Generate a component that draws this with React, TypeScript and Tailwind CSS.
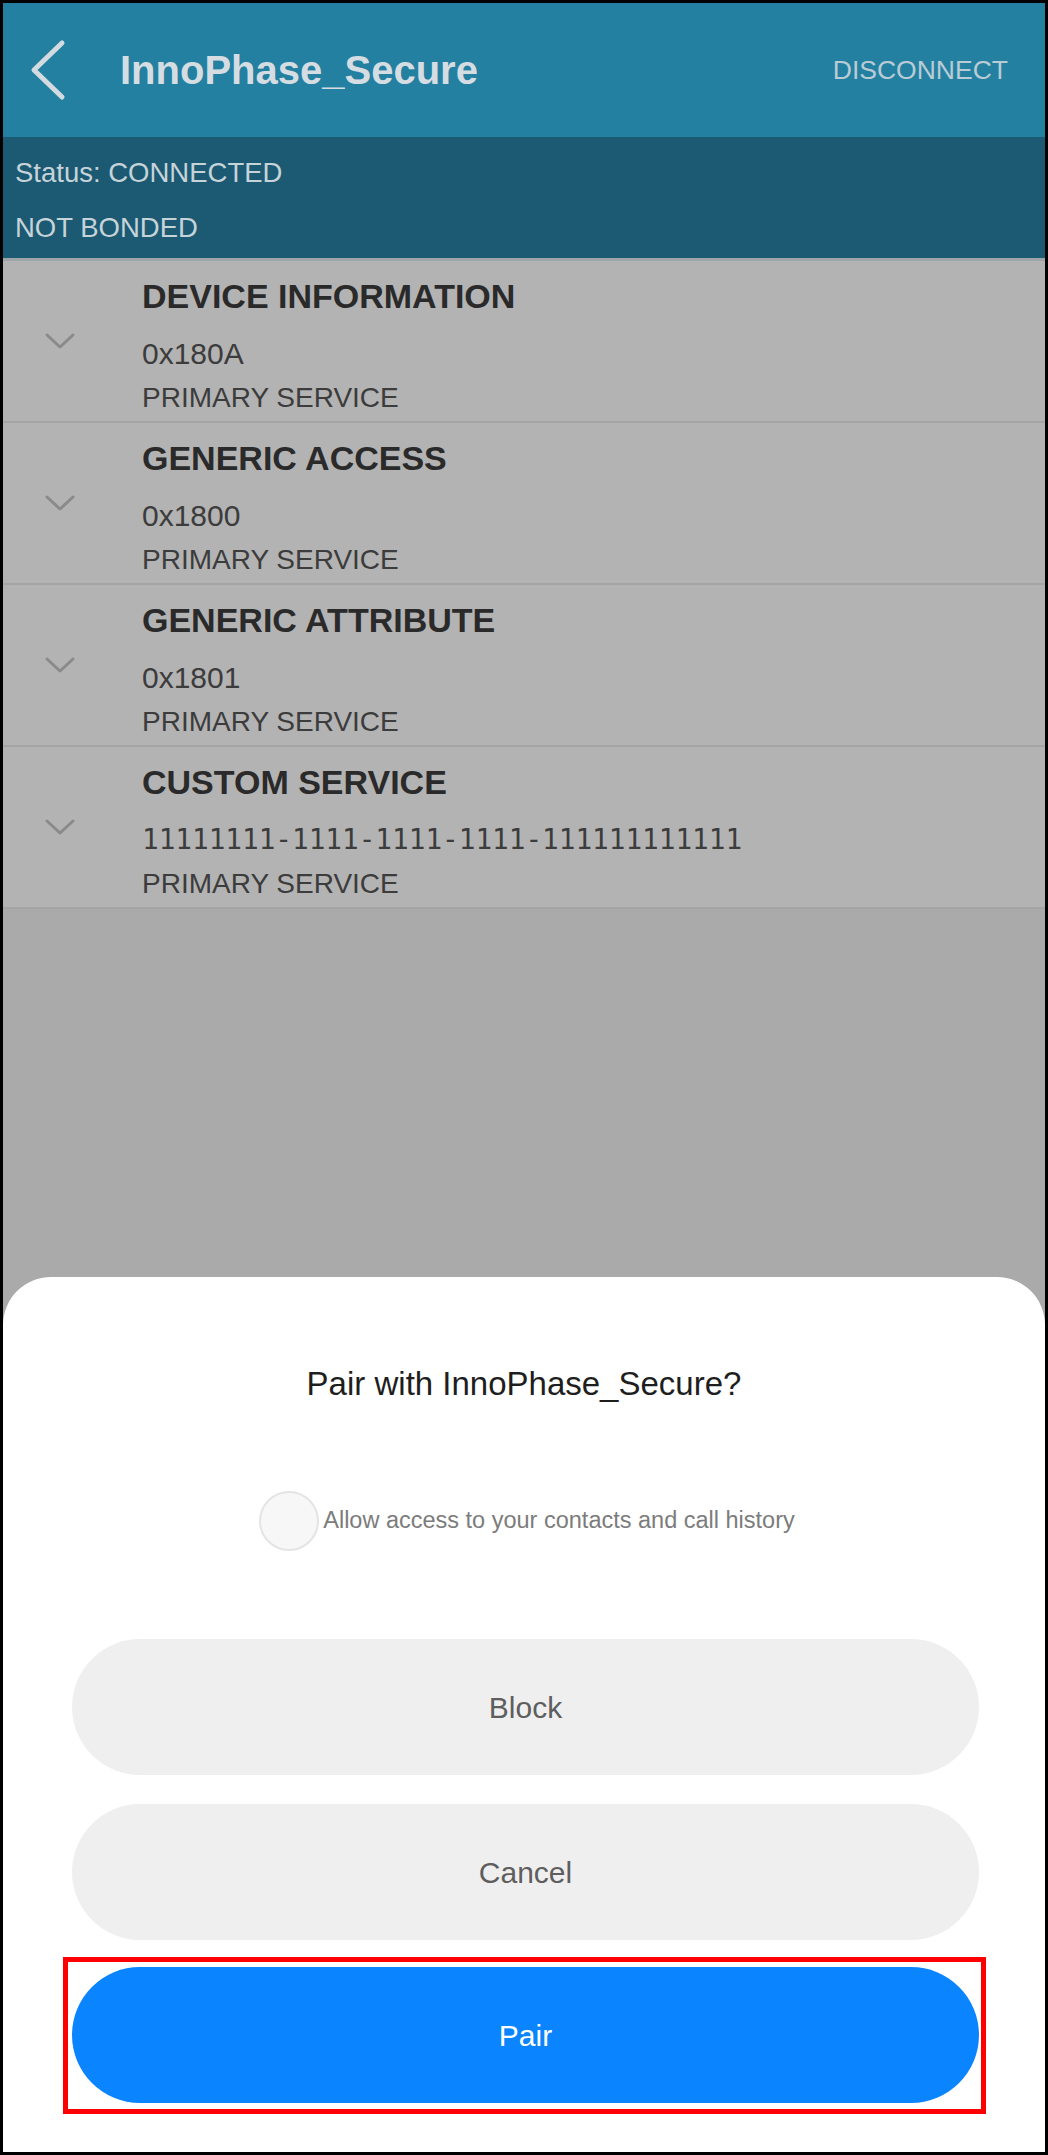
const services = [
  { name: "DEVICE INFORMATION", code: "0x180A" },
  { name: "GENERIC ACCESS", code: "0x1800" },
  { name: "GENERIC ATTRIBUTE", code: "0x1801" },
  { name: "CUSTOM SERVICE", code: "11111111-1111-1111-1111-111111111111", mono: true },
]

function Chevron() {
  return (
    <svg width="32" height="18" viewBox="0 0 32 18" fill="none">
      <path d="M3 3 L16 15 L29 3" stroke="#8a8a8a" strokeWidth="3" strokeLinecap="round" strokeLinejoin="round" />
    </svg>
  )
}

export default function App() {
  return (
    <div className="w-[1048px] h-[2155px] border-[3px] border-black bg-[#aaaaaa] flex flex-col overflow-hidden font-['Liberation_Sans',Arial,sans-serif]">
      {/* top bar */}
      <div className="h-[134px] shrink-0 bg-[#2480a1] flex items-center">
        <svg width="44" height="64" viewBox="0 0 44 64" fill="none" className="ml-[23px]">
          <path d="M36 5 L8 32 L36 59" stroke="#d3dbe0" strokeWidth="5" strokeLinecap="round" strokeLinejoin="round" />
        </svg>
        <div className="ml-[50px] text-[40px] leading-none font-bold text-[#d5dde2]">InnoPhase_Secure</div>
        <div className="ml-auto mr-[37px] text-[26.5px] leading-none text-[#b9ccd5]">DISCONNECT</div>
      </div>

      {/* status */}
      <div className="h-[121px] shrink-0 bg-[#1b5a72] pt-[8px] pl-[12px] text-[27.5px] leading-[55px] text-[#c6d3d9]">
        <div>Status: CONNECTED</div>
        <div>NOT BONDED</div>
      </div>

      <div className="h-[3px] shrink-0 bg-[#9ea5a8]" />

      {/* services */}
      <div className="bg-[#b3b3b3] shrink-0">
        {services.map((s) => (
          <div key={s.name} className="h-[162px] flex border-b-2 border-[#a4a4a4]">
            <div className="w-[139px] shrink-0 flex items-center pl-[41px]">
              <Chevron />
            </div>
            <div className="pt-[15px] text-[#3c3c3c]">
              <div className="text-[34px] leading-[40px] font-bold text-[#2a2a2a]">{s.name}</div>
              <div
                className={
                  s.mono
                    ? "mt-[16px] text-[27.7px] leading-[44px] font-['DejaVu_Sans_Mono',monospace]"
                    : "mt-[16px] text-[30px] leading-[44px]"
                }
              >
                {s.code}
              </div>
              <div className="text-[28px] leading-[44px]">PRIMARY SERVICE</div>
            </div>
          </div>
        ))}
      </div>

      <div className="flex-1" />

      {/* pairing sheet */}
      <div className="h-[875px] shrink-0 bg-white rounded-t-[48px] flex flex-col">
        <div className="pt-[87px] text-center text-[33px] leading-[40px] text-[#1e1e1e]">Pair with InnoPhase_Secure?</div>

        <div className="mt-[86px] h-[62px] flex items-center justify-center pl-[6px]">
          <div className="w-[60px] h-[60px] rounded-full border-2 border-[#e4e4e4] bg-[#f7f7f7]" />
          <span className="ml-[4px] text-[23.5px] text-[#7c7c7c]">Allow access to your contacts and call history</span>
        </div>

        <div className="mt-[87px] ml-[69px] w-[907px] flex flex-col gap-[29px]">
          <button className="h-[136px] rounded-full bg-[#efefef] text-[30px] text-[#5e5e5e]">Block</button>
          <button className="h-[136px] rounded-full bg-[#efefef] text-[30px] text-[#5e5e5e]">Cancel</button>
        </div>

        <div className="mt-[17px] ml-[60px] w-[923px] border-[5px] border-[#ff0000] pt-[5px] pb-[6px] pl-[4px]">
          <button className="w-[907px] h-[136px] rounded-full bg-[#0a84ff] text-[30px] text-white">Pair</button>
        </div>
      </div>
    </div>
  )
}
